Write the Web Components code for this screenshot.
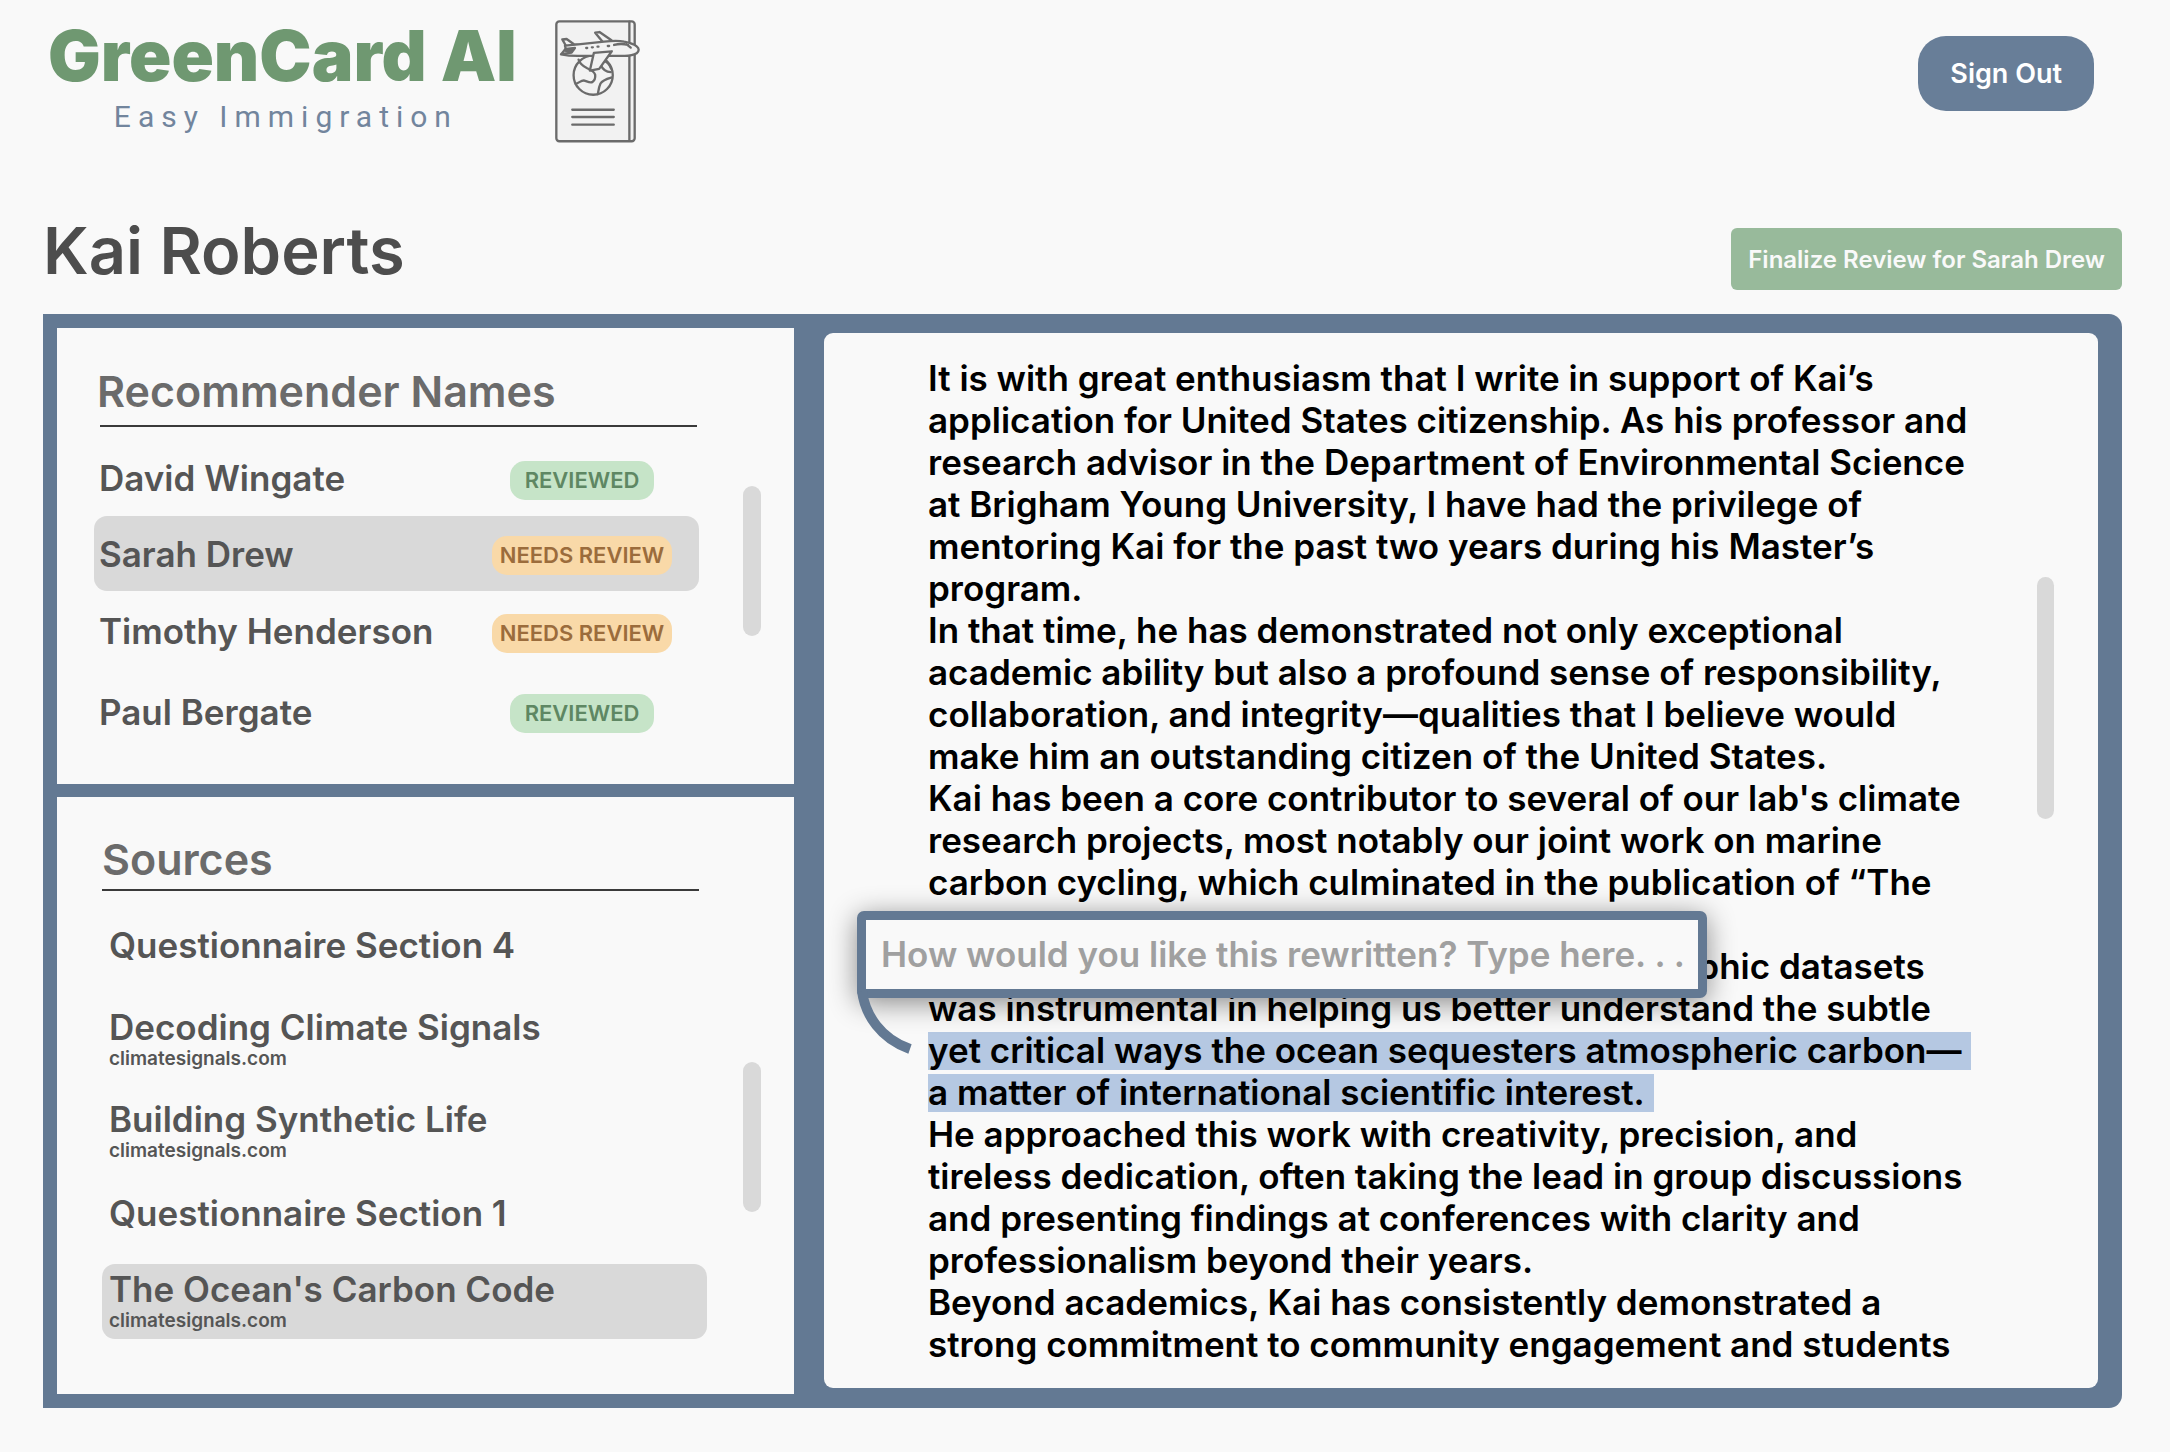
<!DOCTYPE html>
<html lang="en">
<head>
<meta charset="utf-8">
<meta name="viewport" content="width=device-width, initial-scale=1">
<title>GreenCard AI – Review</title>
<style>
  :root {
    --page: #f9f9f9;
    --slate: #637993;
    --grey: #d9d9d9;
    --ink: #555555;
  }
  * { box-sizing: border-box; }
  body {
    margin: 0;
    background: var(--page);
    font-family: Inter, "Liberation Sans", sans-serif;
    font-weight: 600;
    color: var(--ink);
  }
</style>
</head>
<body>
<app-header></app-header>
<main>
  <title-bar name="Kai Roberts" action="Finalize Review for Sarah Drew"></title-bar>
  <review-frame>
    <side-panel slot="side" heading="Recommender Names" kind="people">
      <recommender-row name="David Wingate" status="reviewed"></recommender-row>
      <recommender-row name="Sarah Drew" status="needs" selected></recommender-row>
      <recommender-row name="Timothy Henderson" status="needs"></recommender-row>
      <recommender-row name="Paul Bergate" status="reviewed"></recommender-row>
    </side-panel>
    <side-panel slot="side" heading="Sources" kind="sources">
      <source-item>Questionnaire Section 4</source-item>
      <source-item site="climatesignals.com">Decoding Climate Signals</source-item>
      <source-item site="climatesignals.com">Building Synthetic Life</source-item>
      <source-item>Questionnaire Section 1</source-item>
      <source-item site="climatesignals.com" selected>The Ocean's Carbon Code</source-item>
    </side-panel>
    <letter-view>
      <p>It is with great enthusiasm that I write in support of Kai’s application for United States citizenship. As his professor and research advisor in the Department of Environmental Science at Brigham Young University, I have had the privilege of mentoring Kai for the past two years during his Master’s program.</p>
      <p>In that time, he has demonstrated not only exceptional academic ability but also a profound sense of responsibility, collaboration, and integrity—qualities that I believe would make him an outstanding citizen of the United States.</p>
      <p>Kai has been a core contributor to several of our lab's climate research projects, most notably our joint work on marine carbon cycling, which culminated in the publication of “The Ocean's Carbon Code.”</p>
      <p>His skill in analyzing very complex oceanographic datasets was instrumental in helping us better understand the subtle <letter-mark>yet critical ways the ocean sequesters atmospheric carbon—a matter of international scientific interest.</letter-mark></p>
      <p>He approached this work with creativity, precision, and tireless dedication, often taking the lead in group discussions and presenting findings at conferences with clarity and professionalism beyond their years.</p>
      <p>Beyond academics, Kai has consistently demonstrated a strong commitment to community engagement and students</p>
      <rewrite-popover slot="popover"></rewrite-popover>
    </letter-view>
  </review-frame>
</main>

<script>
const define = (name, html, setup) => {
  const template = document.createElement('template');
  template.innerHTML = `<style>*{box-sizing:border-box}</style>${html}`;
  customElements.define(name, class extends HTMLElement {
    constructor() {
      super();
      this.attachShadow({ mode: 'open' }).append(template.content.cloneNode(true));
    }
    connectedCallback() {
      if (setup) setup(this, s => this.shadowRoot.querySelector(s));
    }
  });
};

define('passport-icon', `
<style>
  :host { display: block; width: 85px; height: 123px; }
  svg { display: block; width: 100%; height: 100%; }
</style>
<svg viewBox="46 31 256 370" fill="none" stroke="#6b6b6b" stroke-width="7" stroke-linejoin="round" stroke-linecap="round" aria-hidden="true">
  <rect x="50" y="35" width="236" height="361" rx="9" fill="#f2f2f2"/>
  <path d="M270 36V395"/>
  <circle cx="161" cy="197" r="59" fill="#f2f2f2"/>
  <path d="M117 150c4 12 14 20 26 26 12 5 22 11 24 20 1 9-3 18-9 22-8 3-16-3-24-5-10-1-16 8-26 10"/>
  <path d="M184 167c5 11 17 20 30 21M190 153c10 2 20 10 25 24"/>
  <path d="M215 204c-14 4-26 8-32 18-5 10-6 20-8 32"/>
  <path d="M78 107L68 89l13-1 22 16 14 2" fill="#f2f2f2"/>
  <path d="M190 97L167 69l13-2 36 25 6 6" fill="#f2f2f2"/>
  <path d="M64 134c5-6 10-10 14-18l-2-8 40-4 78-8c26-3 46-3 60 0 16 3 30 8 38 14 8 6 8 14 0 21-8 5-20 8-36 8H114c-20 0-36-2-50-5z" fill="#f2f2f2"/>
  <path d="M80 118l26-3-10 14-28 4M78 124h22"/>
  <path d="M163 130l54-5-38 53-28 5z" fill="#f2f2f2"/>
  <path d="M224 106c14-4 28-4 42 0M262 104l12 10"/>
  <path d="M140 115h3M157 113h3M174 111h3M205 109h4"/>
  <path d="M98 301H223M98 323H223M98 346H223"/>
</svg>`);

define('brand-logo', `
<style>
  :host { display: flex; align-items: flex-start; gap: 38px; }
  a { display: block; color: inherit; text-decoration: none; text-align: center; }
  .name { display: block; font-size: 70px; line-height: 72px; font-weight: 900; color: #6f9871; white-space: nowrap; }
  .tag { display: block; font: 400 30px/50px Roboto, sans-serif; letter-spacing: 7px; color: #72859d; padding-left: 7px; }
</style>
<a href="#"><span class="name">GreenCard AI</span><span class="tag">Easy Immigration</span></a>
<passport-icon></passport-icon>`);

define('app-header', `
<style>
  :host { display: block; }
  header { display: flex; justify-content: space-between; align-items: flex-start; padding: 20px 76px 0 48px; }
  button { margin-top: 16px; height: 75px; padding: 0 32px; border: 0; border-radius: 28px; background: #687e98; color: #fff; font: 600 27px/34px Inter, sans-serif; }
</style>
<header><brand-logo></brand-logo><button type="button">Sign Out</button></header>`);

define('title-bar', `
<style>
  :host { display: flex; justify-content: space-between; align-items: flex-end; padding: 69px 48px 0 43px; }
  h1 { margin: 0; font-size: 65px; line-height: 78px; font-weight: 600; color: #4d4d4d; }
  button { height: 62px; padding: 2px 17px 0; border: 0; border-radius: 6px; background: #98ba9b; color: #f9f9f9; font: 600 24px/30px Inter, sans-serif; }
</style>
<h1></h1><button type="button"></button>`, (el, $) => {
  $('h1').textContent = el.getAttribute('name');
  $('button').textContent = el.getAttribute('action');
});

define('review-frame', `
<style>
  :host {
    display: grid; grid-template-columns: minmax(0, 737fr) minmax(0, 1274fr); gap: 30px;
    margin: 24px 48px 44px 43px; padding: 14px 24px 14px 14px;
    background: var(--slate); border-radius: 0 13px 13px 0;
  }
  aside { display: flex; flex-direction: column; gap: 13px; }
  section { display: flex; padding: 5px 0 6px; }
</style>
<aside><slot name="side"></slot></aside>
<section><slot></slot></section>`);

define('scroll-rail', `
<style>
  :host { display: block; width: 18px; flex: none; border-radius: 9px; background: var(--grey); }
</style>`);

define('side-panel', `
<style>
  :host { display: flex; background: var(--page); padding: 37px 33px 32px 37px; gap: 44px; }
  :host([kind=sources]) { padding: 36px 33px 55px 45px; gap: 36px; }
  .body { flex: 1; min-width: 0; }
  h2 { margin: 0 2px 13px 6px; font-size: 43px; line-height: 52px; font-weight: 600; color: #6b6b6b; padding-bottom: 8px; border-bottom: 2px solid #3a3a3a; text-indent: -3px; }
  :host([kind=sources]) h2 { margin: 0 8px 17px 0; padding-bottom: 4px; text-indent: 0; }
  .list { display: grid; grid-template-rows: 76px 75px 80px 81px; }
  :host([kind=sources]) .list { grid-template-rows: 94px 92px 82px 88px 75px; align-items: start; }
  scroll-rail { height: 150px; margin-top: 121px; }
  :host([kind=sources]) scroll-rail { margin-top: 229px; }
</style>
<div class="body"><h2></h2><div class="list" role="list"><slot></slot></div></div>
<scroll-rail></scroll-rail>`, (el, $) => {
  $('h2').textContent = el.getAttribute('heading');
});

define('status-badge', `
<style>
  :host { display: block; padding: 0 15px; border-radius: 15px; font-size: 22px; line-height: 39px; background: #c6e4c8; color: #5e8763; }
  :host([status=needs]) { padding: 0 8px; background: #f9d9a8; color: #9b6c3c; }
</style>
<slot></slot>`);

define('recommender-row', `
<style>
  :host { display: grid; }
  button { display: flex; align-items: center; width: 100%; padding: 0 0 0 5px; border: 0; border-radius: 13px; background: none; color: inherit; font: 600 35px/42px Inter, sans-serif; text-align: left; }
  :host([selected]) button { background: var(--grey); }
  .name { flex: 1; }
  .state { display: flex; justify-content: center; width: 234px; padding-top: 4px; }
</style>
<button type="button"><span class="name"></span><span class="state"><status-badge></status-badge></span></button>`, (el, $) => {
  const status = el.getAttribute('status');
  el.setAttribute('role', 'listitem');
  $('.name').textContent = el.getAttribute('name');
  $('status-badge').setAttribute('status', status);
  $('status-badge').textContent = status === 'needs' ? 'NEEDS REVIEW' : 'REVIEWED';
});

define('source-item', `
<style>
  :host { display: block; }
  a { display: flex; flex-direction: column; justify-content: center; gap: 2px; height: 75px; padding: 0 0 2px 7px; border-radius: 13px; color: inherit; text-decoration: none; font-size: 35px; line-height: 38px; }
  :host([selected]) a { background: var(--grey); }
  small { font-size: 19px; line-height: 22px; }
  small:empty { display: none; }
</style>
<a href="#"><span><slot></slot></span><small></small></a>`, (el, $) => {
  el.setAttribute('role', 'listitem');
  $('small').textContent = el.getAttribute('site') || '';
});

define('letter-mark', `
<style>
  mark {
    color: inherit; padding-right: 9px;
    background: linear-gradient(#b5c8e2, #b5c8e2) 0 3px / 100% 38px no-repeat;
    -webkit-box-decoration-break: clone; box-decoration-break: clone;
  }
</style>
<mark><slot></slot></mark>`);

define('letter-view', `
<style>
  :host { position: relative; display: flex; flex: 1; gap: 60px; padding: 24px 44px 23px 104px; background: var(--page); border-radius: 9px; }
  article { flex: 1; min-width: 0; font-size: 35px; line-height: 42px; color: #000; }
  ::slotted(p) { margin: 0; }
  scroll-rail { height: 242px; margin-top: 220px; width: 17px; }
</style>
<article><slot></slot></article>
<scroll-rail></scroll-rail>
<slot name="popover"></slot>`);

define('rewrite-popover', `
<style>
  :host { position: absolute; left: 33px; top: 578px; }
  input {
    display: block; width: 850px; height: 87px; padding: 0 0 2px 15px; border: 9px solid var(--slate); border-radius: 7px;
    background: var(--page); font: 600 35px/42px Inter, sans-serif; color: #000;
    box-shadow: 0 5px 28px rgba(0, 0, 0, .45); outline: none;
  }
  input::placeholder { color: #a0a0a0; opacity: 1; }
  svg { position: absolute; left: 0; top: 80px; width: 60px; height: 70px; }
</style>
<input type="text" aria-label="Rewrite instructions" placeholder="How would you like this rewritten? Type here. . .">
<svg viewBox="0 0 60 70" fill="none" stroke="#637993" stroke-width="10" aria-hidden="true"><path d="M5 0C8 24 24 48 53 58"/></svg>`);
</script>
</body>
</html>
